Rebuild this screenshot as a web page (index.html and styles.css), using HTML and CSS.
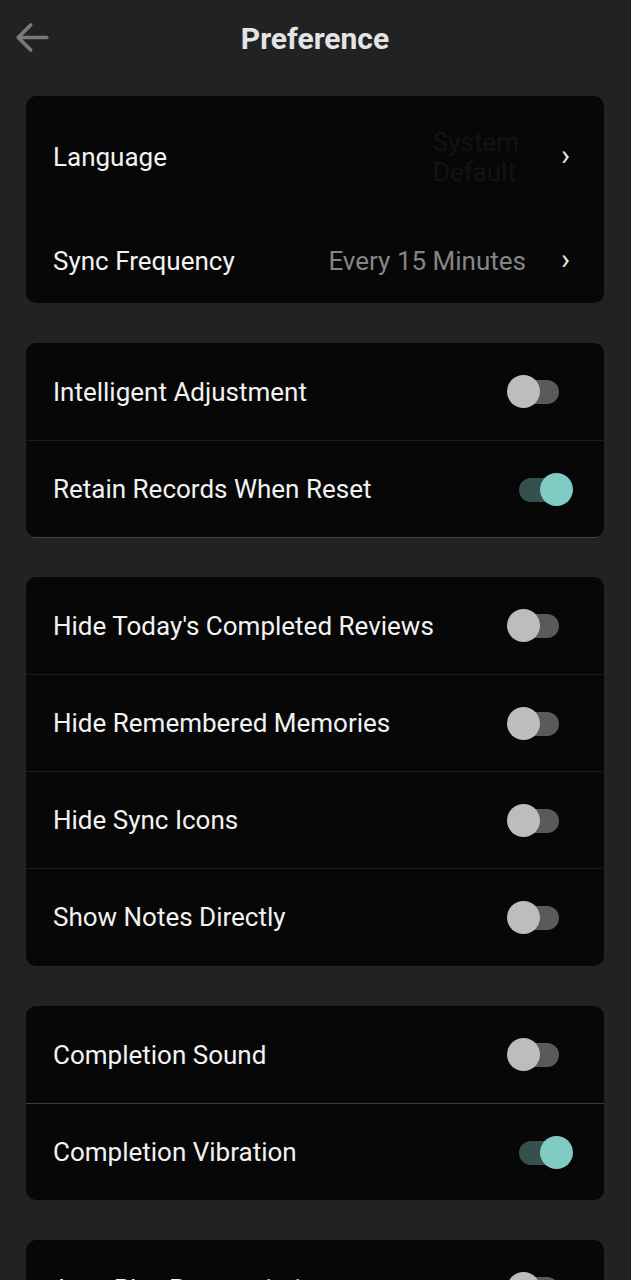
FILE: index.html
```html
<!DOCTYPE html>
<html lang="en">
<head>
    <meta charset="UTF-8">
    <meta name="viewport" content="width=device-width, initial-scale=1.0">
    <title>Preference</title>
    <link rel="stylesheet" href="styles.css">
</head>
<body>
    <div class="header">
        <svg class="back" viewBox="0 0 24 24" width="43" height="43">
            <path d="M20 12H5M11 5l-7 7 7 7" fill="none" stroke="#7a7a7a" stroke-width="2" stroke-linecap="round" stroke-linejoin="round"/>
        </svg>
        <h1>Preference</h1>
    </div>

    <div class="card nav">
        <div class="row first">
            <span class="label">Language</span>
            <span class="value hidden-value">System<br>Default</span>
            <span class="chevron">&#8250;</span>
        </div>
        <div class="row second">
            <span class="label">Sync Frequency</span>
            <span class="value">Every 15 Minutes</span>
            <span class="chevron">&#8250;</span>
        </div>
    </div>

    <div class="card">
        <div class="row">
            <span class="label">Intelligent Adjustment</span>
            <span class="switch"><span class="track"></span><span class="thumb"></span></span>
        </div>
        <div class="row">
            <span class="label">Retain Records When Reset</span>
            <span class="switch on"><span class="track"></span><span class="thumb"></span></span>
        </div>
    </div>
    <div class="under-line"></div>

    <div class="card long">
        <div class="row">
            <span class="label">Hide Today's Completed Reviews</span>
            <span class="switch"><span class="track"></span><span class="thumb"></span></span>
        </div>
        <div class="row">
            <span class="label">Hide Remembered Memories</span>
            <span class="switch"><span class="track"></span><span class="thumb"></span></span>
        </div>
        <div class="row">
            <span class="label">Hide Sync Icons</span>
            <span class="switch"><span class="track"></span><span class="thumb"></span></span>
        </div>
        <div class="row">
            <span class="label">Show Notes Directly</span>
            <span class="switch"><span class="track"></span><span class="thumb"></span></span>
        </div>
    </div>

    <div class="card light-divider">
        <div class="row">
            <span class="label">Completion Sound</span>
            <span class="switch"><span class="track"></span><span class="thumb"></span></span>
        </div>
        <div class="row">
            <span class="label">Completion Vibration</span>
            <span class="switch on"><span class="track"></span><span class="thumb"></span></span>
        </div>
    </div>

    <div class="card">
        <div class="row">
            <span class="label">Auto Play Pronunciation</span>
            <span class="switch"><span class="track"></span><span class="thumb"></span></span>
        </div>
    </div>
</body>
</html>
```

FILE: styles.css
```css
body {
    font-family: Roboto, "Liberation Sans", sans-serif;
    background-color: #212224;
    color: #f2f2f2;
    margin: 0;
    padding: 0 27px 0 26px;
    overflow: hidden;
}
.header {
    height: 76px;
    display: flex;
    align-items: center;
    justify-content: center;
    position: relative;
    margin-bottom: 20px;
}
.back {
    position: absolute;
    left: -15px;
    top: 16px;
}
h1 {
    margin: 0;
    font-size: 30px;
    font-weight: 700;
    color: #e4e4e4;
}
.card {
    background-color: #070707;
    border-radius: 10px;
    margin-bottom: 40px;
}
.card.long {
    padding-bottom: 1px;
}
.row {
    box-sizing: border-box;
    height: 97px;
    display: flex;
    align-items: center;
    padding: 0 31px 0 27px;
    border-top: 1px solid #1b1b1b;
}
.row:first-child {
    border-top: none;
}
.card.nav .row {
    border-top: none;
    padding-right: 34px;
}
.card.nav .row.first {
    height: 122px;
}
.card.nav .row.second {
    height: 85px;
}
.card.light-divider .row {
    border-top-color: #3c3c3c;
}
.label {
    font-size: 26px;
    flex: 1;
}
.value {
    font-size: 26px;
    color: #858585;
    margin-right: 35px;
}
.hidden-value {
    color: #131313;
    line-height: 30px;
    margin-right: 42px;
}
.chevron {
    font-size: 30px;
    color: #e8e8e8;
    line-height: 1;
    margin-bottom: 4px;
}
.switch {
    position: relative;
    width: 66px;
    height: 33px;
}
.track {
    position: absolute;
    left: 12px;
    top: 5px;
    width: 40px;
    height: 24px;
    border-radius: 12px;
    background-color: #5a5a5a;
}
.thumb {
    position: absolute;
    left: 0;
    top: 0;
    width: 33px;
    height: 33px;
    border-radius: 50%;
    background-color: #bdbdbd;
}
.switch.on .track {
    background-color: #35504d;
}
.switch.on .thumb {
    left: 33px;
    background-color: #80cbc4;
}
.under-line {
    height: 1px;
    background-color: #46464a;
    margin: -40px 7px 39px;
}
```
